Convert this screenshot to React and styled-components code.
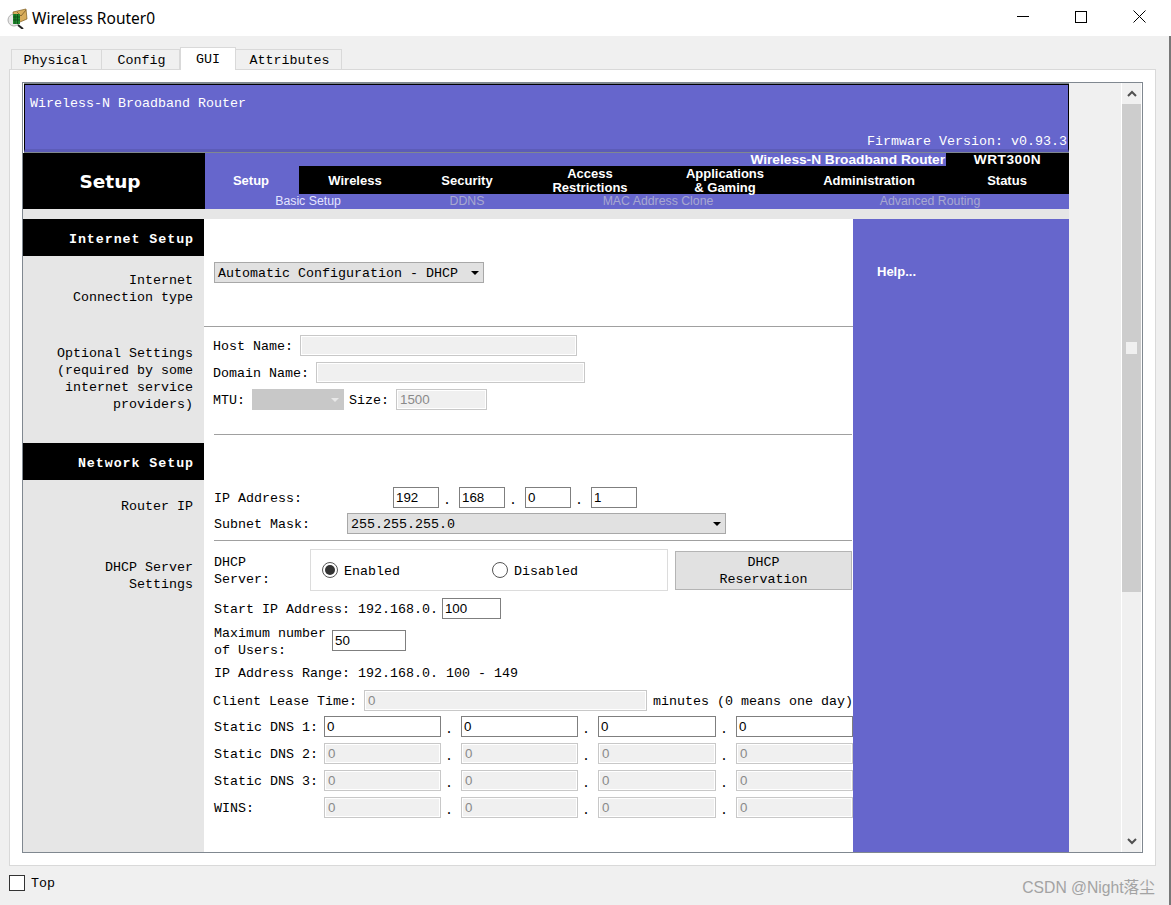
import React from 'react';
import styled, { createGlobalStyle } from 'styled-components';

const PURPLE = '#6666cc';
const MONO = '"Liberation Mono", monospace';

const GlobalStyle = createGlobalStyle`
  html, body {
    margin: 0;
    padding: 0;
    background: #f0f0f0;
  }
  * { box-sizing: border-box; }
`

const Screen = styled.div`
  display: flex;
  width: 1171px;
  height: 905px;
  overflow: hidden;
  font-family: ${MONO};
  font-size: 13.333px;
  color: #000;
`

const Window = styled.div`
  display: flex;
  flex-direction: column;
  width: 1169px;
  background: #f0f0f0;
`

const EdgeStrip = styled.div`
  width: 2px;
  background: linear-gradient(#fff 0, #fff 36px, #777 36px, #777 100%);
`

const TitleBar = styled.div`
  display: flex;
  align-items: center;
  height: 36px;
  padding: 0 1px 0 7px;
  background: #fff;
`

const TitleText = styled.span`
  margin-left: 4px;
  font-family: "Noto Sans", sans-serif;
  font-size: 15.5px;
  color: #000;
`

const WindowControls = styled.div`
  display: flex;
  margin-left: auto;
  margin-top: -3px;
`

const ControlButton = styled.div`
  display: flex;
  align-items: center;
  justify-content: center;
  width: 58px;
  height: 30px;
`

const TabStrip = styled.div`
  display: flex;
  align-items: flex-end;
  height: 23px;
  margin: 11px 0 -1px 11px;
  position: relative;
  z-index: 1;
`

const Tab = styled.div`
  display: flex;
  align-items: center;
  justify-content: center;
  width: ${props => props.$width}px;
  height: ${props => (props.$active ? 23 : 21)}px;
  padding-top: ${props => (props.$active ? 0 : 2)}px;
  padding-left: ${props => props.$pad || 0}px;
  padding-right: ${props => (props.$first ? 2 : 0)}px;
  background: ${props => (props.$active ? '#fff' : '#f0f0f0')};
  border: 1px solid #d9d9d9;
  border-left-width: ${props => (props.$first || props.$active ? 1 : 0)}px;
  border-bottom: ${props => (props.$active ? 'none' : '1px solid #d9d9d9')};
`

const Panel = styled.div`
  width: 1147px;
  height: 797px;
  margin-left: 9px;
  padding: 12px;
  background: #fff;
  border: 1px solid #d9d9d9;
`

const Frame = styled.div`
  display: flex;
  width: 1121px;
  height: 771px;
  border: 1px solid #808890;
`

const Page = styled.div`
  width: 1046px;
  display: flex;
  flex-direction: column;
  background: #fff;
`

const Gutter = styled.div`
  width: 52px;
  background: #f0f0f0;
`

const Scrollbar = styled.div`
  display: flex;
  flex-direction: column;
  width: 21px;
  background: #f0f0f0;
  border-left: 1px solid #fff;
  border-right: 1px solid #fff;
`

const ScrollArrow = styled.div`
  display: flex;
  align-items: center;
  justify-content: center;
  height: 21px;
  margin-top: ${props => (props.$bottom ? 'auto' : 0)};
`

const ScrollThumb = styled.div`
  display: flex;
  align-items: center;
  justify-content: center;
  height: 488px;
  background: #cdcdcd;
`

const ScrollGrip = styled.div`
  width: 11px;
  height: 12px;
  background: #f0f0f0;
`

const Header = styled.div`
  display: flex;
  flex-direction: column;
  justify-content: space-between;
  height: 68px;
  margin: 1px 0 1px 1px;
  padding: 11px 1px 0 5px;
  background: ${PURPLE};
  color: #fff;
  border: 1px solid #000;
  border-bottom: 3px solid #5c5cb8;
  box-shadow: 0 1px 0 #808890, 0 -1px 0 #808890;
`

const FirmwareText = styled.div`
  align-self: flex-end;
`

const Nav = styled.div`
  display: flex;
  height: 56px;
`

const NavTitle = styled.div`
  display: flex;
  align-items: center;
  justify-content: center;
  width: 182px;
  padding-right: 8px;
  background: #000;
  color: #fff;
  font-family: "DejaVu Sans", sans-serif;
  font-weight: 700;
  font-size: 18.5px;
`

const NavBody = styled.div`
  display: flex;
  flex-direction: column;
  flex: 1;
  background: ${PURPLE};
  font-family: "Liberation Sans", sans-serif;
  color: #fff;
`

const ModelRow = styled.div`
  display: flex;
  justify-content: flex-end;
  height: 13px;
  line-height: 13px;
  font-weight: 700;
  font-size: 13.7px;
`

const ModelName = styled.div`
  padding-right: 1px;
  white-space: nowrap;
`

const ModelCode = styled.div`
  width: 123px;
  background: #000;
  text-align: center;
  letter-spacing: 0.5px;
`

const TabRow = styled.div`
  display: flex;
  height: 28px;
  background: #000;
`

const NavTab = styled.div`
  display: flex;
  align-items: center;
  justify-content: center;
  width: ${props => props.$width}px;
  padding: 1px ${props => (props.$active ? 2 : 0)}px 0 0;
  background: ${props => (props.$active ? PURPLE : '#000')};
  text-align: center;
  white-space: pre-line;
  font-weight: 700;
  font-size: 13px;
  line-height: 14px;
`

const SubRow = styled.div`
  display: grid;
  grid-template-columns: 206px 112px 270px 274px;
  height: 15px;
  font-size: 12.3px;
  line-height: 15px;
  text-align: center;
`

const SubItem = styled.div`
  color: ${props => (props.$active ? '#e4e4ff' : '#a8a8d0')};
`

const GreyStrip = styled.div`
  height: 10px;
  background: #e6e6e6;
`

const Main = styled.div`
  display: flex;
  flex: 1;
`

const LeftColumn = styled.div`
  width: 181px;
  background: #e6e6e6;
`

const SectionHead = styled.div`
  display: flex;
  align-items: center;
  justify-content: flex-end;
  height: 37px;
  margin-top: ${props => props.$top || 0}px;
  padding: 3px 10px 0 0;
  background: #000;
  color: #fff;
  font-weight: 700;
  letter-spacing: 0.93px;
`

const SideLabel = styled.div`
  margin-top: ${props => props.$top}px;
  padding-right: 11px;
  text-align: right;
  line-height: 17px;
`

const Content = styled.div`
  display: flex;
  flex-direction: column;
  width: 649px;
`

const SelectArea = styled.div`
  height: 107px;
  padding: 43px 0 0 10px;
`

const Rule = styled.hr`
  flex: none;
  width: ${props => (props.$full ? '649px' : '638px')};
  height: 1px;
  margin: ${props => props.$top || 0}px 0 0 ${props => (props.$full ? 0 : 10)}px;
  background: #a0a0a0;
  border: none;
`

const Row = styled.div`
  display: flex;
  align-items: center;
  height: ${props => props.$height || 21}px;
  margin-top: ${props => props.$top || 6}px;
  margin-left: ${props => (props.$tight ? 9 : 10)}px;
  white-space: nowrap;
`

const Label = styled.div`
  flex: none;
  width: ${props => (props.$width ? `${props.$width}px` : 'auto')};
  margin-left: ${props => props.$before || 0}px;
  margin-right: ${props => props.$gap || 0}px;
  padding-top: 2px;
  line-height: 17px;
  white-space: pre-line;
`

const Field = styled.div`
  flex: none;
  display: flex;
  align-items: center;
  width: ${props => props.$width}px;
  height: 21px;
  padding-left: ${props => (props.$disabled ? 3 : 2)}px;
  background: ${props => (props.$disabled ? '#f0f0f0' : '#fff')};
  border: 1px solid ${props => (props.$disabled ? '#c8c8c8' : '#7f7f7f')};
  outline: ${props => (props.$disabled ? '1px solid #fff' : 'none')};
  outline-offset: -2px;
  color: ${props => (props.$disabled ? '#8a8a8a' : '#000')};
  font-family: "Liberation Sans", sans-serif;
  font-size: 13.333px;
`

const Dot = styled.div`
  flex: none;
  width: 20px;
  padding: 5px 4px 0 0;
  text-align: center;
`

const Select = styled.div`
  flex: none;
  display: flex;
  align-items: center;
  justify-content: space-between;
  width: ${props => props.$width}px;
  height: 21px;
  padding: 2px 4px 0 3px;
  background: ${props => (props.$disabled ? '#c8c8c8' : '#e1e1e1')};
  border: 1px solid ${props => (props.$disabled ? '#c8c8c8' : '#a8a8a8')};
`

const SelectArrow = styled.div`
  width: 0;
  height: 0;
  margin-bottom: 2px;
  border-left: 4px solid transparent;
  border-right: 4px solid transparent;
  border-top: 4px solid ${props => (props.$disabled ? '#e8e8e8' : '#000')};
`

const RadioBox = styled.div`
  flex: none;
  display: flex;
  align-items: center;
  width: 358px;
  height: 42px;
  padding-left: 11px;
  border: 1px solid #dcdcdc;
`

const RadioOption = styled.div`
  display: flex;
  align-items: center;
  gap: 6px;
  width: 170px;
`

const RadioText = styled.span`
  padding-top: 2px;
`

const RadioDot = styled.div`
  display: flex;
  align-items: center;
  justify-content: center;
  width: 16px;
  height: 16px;
  border-radius: 50%;
  background: #fff;
  border: 1px solid #555;

  &::after {
    content: '';
    display: ${props => (props.$checked ? 'block' : 'none')};
    width: 10px;
    height: 10px;
    border-radius: 50%;
    background: #333;
  }
`

const ReserveButton = styled.div`
  flex: none;
  width: 177px;
  height: 39px;
  margin-left: 7px;
  padding-top: 2px;
  background: #e1e1e1;
  border: 1px solid #b4b4b4;
  text-align: center;
  line-height: 17px;
`

const HelpColumn = styled.div`
  width: 216px;
  padding: 45px 0 0 24px;
  background: ${PURPLE};
  color: #fff;
  font-family: "Liberation Sans", sans-serif;
  font-weight: 700;
  font-size: 13px;
`

const Footer = styled.div`
  display: flex;
  align-items: center;
  height: 39px;
  padding: 0 14px 5px 9px;
`

const CheckBox = styled.div`
  width: 16px;
  height: 16px;
  margin-right: 6px;
  background: #fff;
  border: 1px solid #333;
`

const TopLabel = styled.span`
  padding-top: 1px;
`

const Watermark = styled.div`
  margin-left: auto;
  margin-top: 6px;
  color: #a3a3a3;
  font-family: "Liberation Sans", "Noto Sans CJK SC", sans-serif;
  font-size: 15.7px;
`

const RouterIcon = () => (
  <svg width="21" height="21" viewBox="0 0 21 21">
    <circle cx="7" cy="12" r="6" fill="#e8e8e8" stroke="#b0b0b0" />
    <path d="M11 17l5 4" stroke="#222" strokeWidth="2" />
    <path d="M6 4l13-3 1 10-7 3-6-2z" fill="#d8ad5c" stroke="#7a5a20" strokeWidth="0.7" />
    <path d="M10 4l4 4 5-6" fill="none" stroke="#8a6a30" strokeWidth="1" />
    <rect x="6" y="6" width="7" height="10" fill="#1f8a2e" />
    <path d="M8 6v10M10.500 6v10M6 9h7M6 12h7" stroke="#0c4a16" strokeWidth="0.8" />
  </svg>
);

const MinimizeIcon = () => (
  <svg width="12" height="12" viewBox="0 0 12 12">
    <path d="M0 5.500h12" stroke="#000" strokeWidth="1" />
  </svg>
);

const MaximizeIcon = () => (
  <svg width="12" height="12" viewBox="0 0 12 12">
    <rect x="0.500" y="0.500" width="11" height="11" fill="none" stroke="#000" strokeWidth="1" />
  </svg>
);

const CloseIcon = () => (
  <svg width="13" height="13" viewBox="0 0 13 13">
    <path d="M0.500 0.500l12 12M12.500 0.500l-12 12" stroke="#000" strokeWidth="1" />
  </svg>
);

const Chevron = ({ d }) => (
  <svg width="10" height="7" viewBox="0 0 10 7">
    <path d={d} fill="none" stroke="#505050" strokeWidth="2" />
  </svg>
);

const tabs = [
  { label: 'Physical', width: 91, first: true },
  { label: 'Config', width: 78, pad: 2 },
  { label: 'GUI', width: 56, active: true },
  { label: 'Attributes', width: 106, pad: 2 },
];

const navTabs = [
  { label: 'Setup', width: 94, active: true },
  { label: 'Wireless', width: 112 },
  { label: 'Security', width: 112 },
  { label: 'Access\nRestrictions', width: 134 },
  { label: 'Applications\n& Gaming', width: 136 },
  { label: 'Administration', width: 152 },
  { label: 'Status', width: 124 },
];

const dnsRows = [
  { label: 'Static DNS 1:', disabled: false },
  { label: 'Static DNS 2:', disabled: true },
  { label: 'Static DNS 3:', disabled: true },
  { label: 'WINS:', disabled: true },
];

function App() {
  return (
    <Screen>
      <GlobalStyle />
      <Window>
        <TitleBar>
          <RouterIcon />
          <TitleText>Wireless Router0</TitleText>
          <WindowControls>
            <ControlButton><MinimizeIcon /></ControlButton>
            <ControlButton><MaximizeIcon /></ControlButton>
            <ControlButton><CloseIcon /></ControlButton>
          </WindowControls>
        </TitleBar>

        <TabStrip>
          {tabs.map(tab => (
            <Tab key={tab.label} $width={tab.width} $active={tab.active} $first={tab.first} $pad={tab.pad}>
              {tab.label}
            </Tab>
          ))}
        </TabStrip>

        <Panel>
          <Frame>
            <Page>
              <Header>
                <div>Wireless-N Broadband Router</div>
                <FirmwareText>Firmware Version: v0.93.3</FirmwareText>
              </Header>

              <Nav>
                <NavTitle>Setup</NavTitle>
                <NavBody>
                  <ModelRow>
                    <ModelName>Wireless-N Broadband Router</ModelName>
                    <ModelCode>WRT300N</ModelCode>
                  </ModelRow>
                  <TabRow>
                    {navTabs.map(tab => (
                      <NavTab key={tab.label} $width={tab.width} $active={tab.active}>
                        {tab.label}
                      </NavTab>
                    ))}
                  </TabRow>
                  <SubRow>
                    <SubItem $active>Basic Setup</SubItem>
                    <SubItem>DDNS</SubItem>
                    <SubItem>MAC Address Clone</SubItem>
                    <SubItem>Advanced Routing</SubItem>
                  </SubRow>
                </NavBody>
              </Nav>

              <GreyStrip />

              <Main>
                <LeftColumn>
                  <SectionHead>Internet Setup</SectionHead>
                  <SideLabel $top={16}>Internet<br />Connection type</SideLabel>
                  <SideLabel $top={39}>
                    Optional Settings<br />(required by some<br />internet service<br />providers)
                  </SideLabel>
                  <SectionHead $top={30}>Network Setup</SectionHead>
                  <SideLabel $top={18}>Router IP</SideLabel>
                  <SideLabel $top={44}>DHCP Server<br />Settings</SideLabel>
                </LeftColumn>

                <Content>
                  <SelectArea>
                    <Select $width={270}>
                      Automatic Configuration - DHCP
                      <SelectArrow />
                    </Select>
                  </SelectArea>
                  <Rule $full />

                  <Row $top={8} $tight>
                    <Label $gap={7}>Host Name:</Label>
                    <Field $disabled $width={277} />
                  </Row>
                  <Row $tight>
                    <Label $gap={7}>Domain Name:</Label>
                    <Field $disabled $width={269} />
                  </Row>
                  <Row $tight>
                    <Label $gap={7}>MTU:</Label>
                    <Select $disabled $width={92}><span /><SelectArrow $disabled /></Select>
                    <Label $gap={7} $before={5}>Size:</Label>
                    <Field $disabled $width={91}>1500</Field>
                  </Row>
                  <Rule $top={24} />

                  <Row $top={52}>
                    <Label $width={179}>IP Address:</Label>
                    <Field $width={46}>192</Field>
                    <Dot>.</Dot>
                    <Field $width={46}>168</Field>
                    <Dot>.</Dot>
                    <Field $width={46}>0</Field>
                    <Dot>.</Dot>
                    <Field $width={46}>1</Field>
                  </Row>
                  <Row $top={5}>
                    <Label $width={133}>Subnet Mask:</Label>
                    <Select $width={379}>
                      255.255.255.0
                      <SelectArrow />
                    </Select>
                  </Row>
                  <Rule $top={6} />

                  <Row $top={8} $height={42}>
                    <Label $width={96}>{'DHCP\nServer:'}</Label>
                    <RadioBox>
                      <RadioOption><RadioDot $checked /><RadioText>Enabled</RadioText></RadioOption>
                      <RadioOption><RadioDot /><RadioText>Disabled</RadioText></RadioOption>
                    </RadioBox>
                    <ReserveButton>DHCP<br />Reservation</ReserveButton>
                  </Row>
                  <Row $top={7}>
                    <Label $gap={4}>Start IP Address: 192.168.0.</Label>
                    <Field $width={59}>100</Field>
                  </Row>
                  <Row $top={11}>
                    <Label $width={118}>{'Maximum number\nof Users:'}</Label>
                    <Field $width={74}>50</Field>
                  </Row>
                  <Row $top={11}>
                    <Label>IP Address Range: 192.168.0. 100 - 149</Label>
                  </Row>
                  <Row $tight $top={7}>
                    <Label $gap={7}>Client Lease Time:</Label>
                    <Field $disabled $width={283}>0</Field>
                    <Label $before={6}>minutes (0 means one day)</Label>
                  </Row>
                  {dnsRows.map((row, index) => (
                    <Row key={row.label} $top={index === 0 ? 5 : 6}>
                      <Label $width={110}>{row.label}</Label>
                      <Field $width={117} $disabled={row.disabled}>0</Field>
                      <Dot>.</Dot>
                      <Field $width={117} $disabled={row.disabled}>0</Field>
                      <Dot>.</Dot>
                      <Field $width={118} $disabled={row.disabled}>0</Field>
                      <Dot>.</Dot>
                      <Field $width={117} $disabled={row.disabled}>0</Field>
                    </Row>
                  ))}
                </Content>

                <HelpColumn>Help...</HelpColumn>
              </Main>
            </Page>

            <Gutter />

            <Scrollbar>
              <ScrollArrow><Chevron d="M1 6l4-4 4 4" /></ScrollArrow>
              <ScrollThumb><ScrollGrip /></ScrollThumb>
              <ScrollArrow $bottom><Chevron d="M1 1l4 4 4-4" /></ScrollArrow>
            </Scrollbar>
          </Frame>
        </Panel>

        <Footer>
          <CheckBox />
          <TopLabel>Top</TopLabel>
          <Watermark>CSDN @Night落尘</Watermark>
        </Footer>
      </Window>
      <EdgeStrip />
    </Screen>
  );
}

export default App;
